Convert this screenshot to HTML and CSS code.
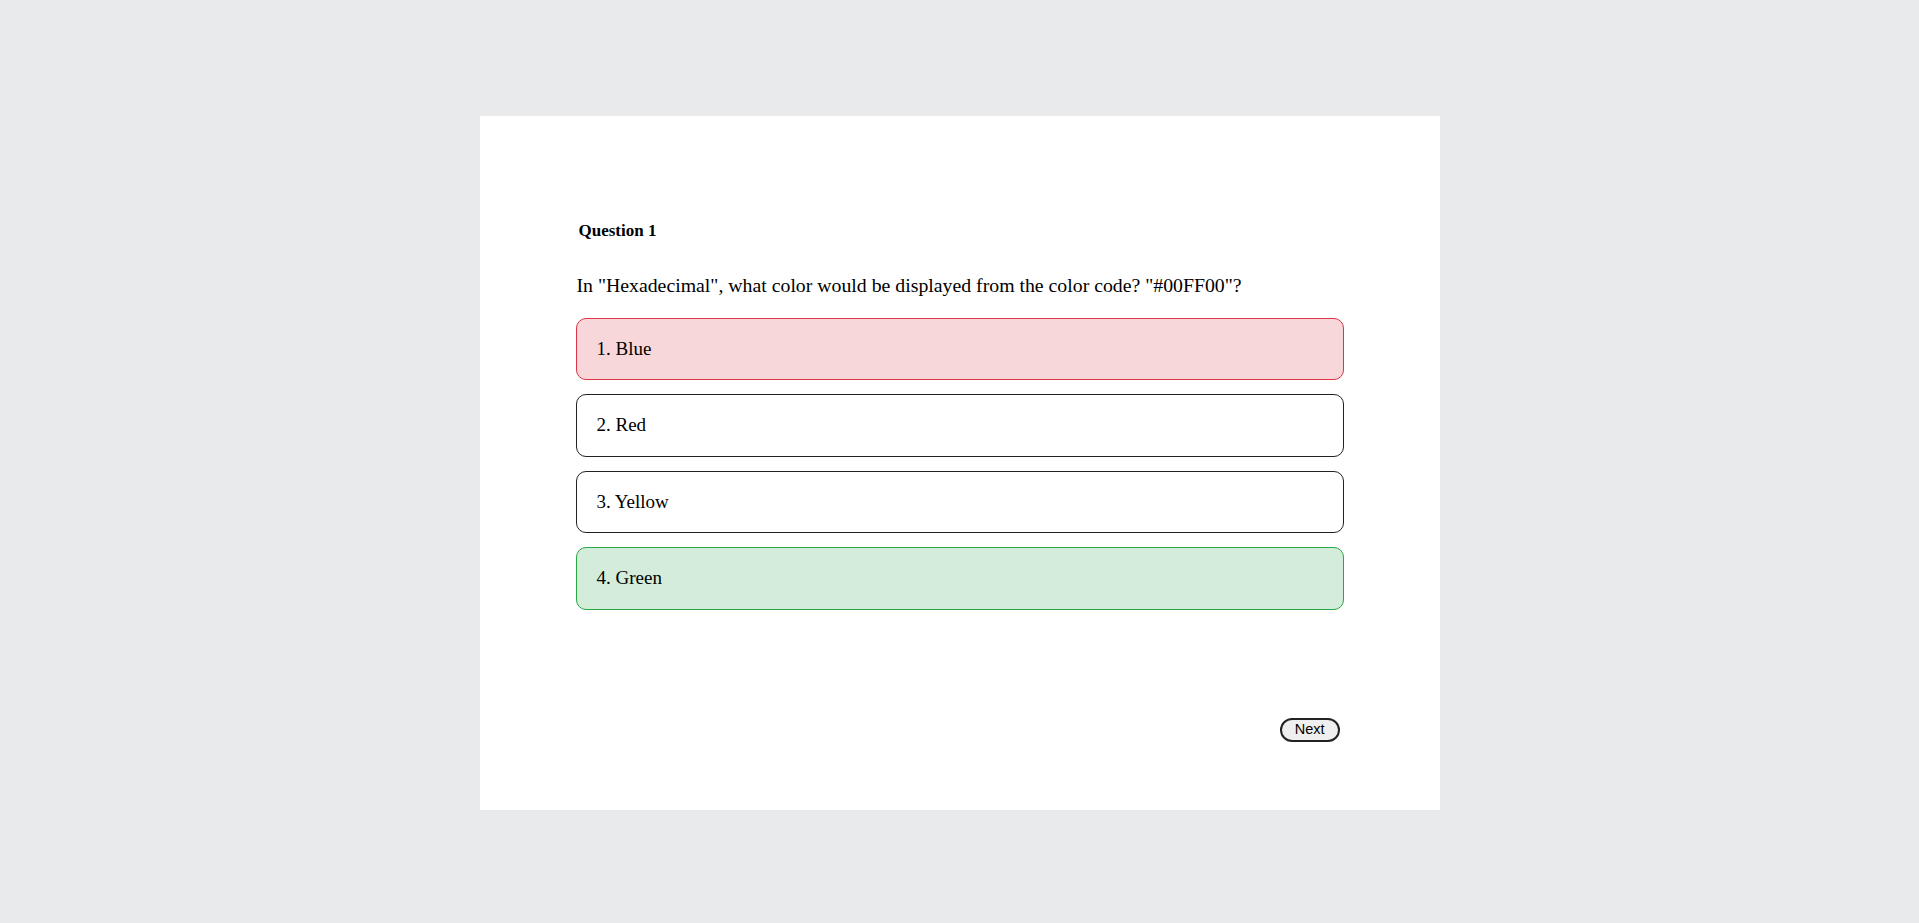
FILE: index.html
```html
<!DOCTYPE html>
<html lang="en">
<head>
<meta charset="utf-8">
<title>Quiz</title>
<link rel="stylesheet" href="styles.css">
</head>
<body>
<main class="card">
  <h4 class="q-label">Question 1</h4>
  <p class="q-text">In "Hexadecimal", what color would be displayed from the color code? "#00FF00"?</p>
  <div class="options">
    <div class="option wrong">1. Blue</div>
    <div class="option">2. Red</div>
    <div class="option">3. Yellow</div>
    <div class="option right">4. Green</div>
  </div>
  <div class="actions">
    <button class="next-btn" type="button">Next</button>
  </div>
</main>
</body>
</html>
```

FILE: styles.css
```css
html, body {
  margin: 0;
  padding: 0;
}
body {
  background: #e9eaec;
  font-family: "Liberation Serif", "Times New Roman", serif;
  color: #000;
  min-height: 923px;
  padding-top: 116px;
  box-sizing: border-box;
}
.card {
  width: 960px;
  margin: 0 auto;
  background: #fff;
  box-sizing: border-box;
  padding: 106px 96px 68px 96px;
}
.q-label {
  margin: 0;
  padding-left: 3px;
  font-size: 17px;
  line-height: 18px;
  font-weight: bold;
}
.q-text {
  margin: 34px 0 0 1px;
  font-size: 19.8px;
  line-height: 23px;
}
.options {
  margin-top: 21px;
  display: flex;
  flex-direction: column;
  gap: 14px;
}
.option {
  border: 1px solid #222;
  border-radius: 10px;
  padding: 19px 20px;
  font-size: 19px;
  line-height: 22.4px;
  background: #fff;
}
.option.wrong {
  background: #f8d7da;
  border-color: #dc3545;
}
.option.right {
  background: #d4edda;
  border-color: #28a745;
}
.actions {
  margin-top: 108px;
  display: flex;
  justify-content: flex-end;
  padding-right: 4px;
}
.next-btn {
  font-family: "Liberation Sans", Arial, sans-serif;
  font-size: 14.5px;
  line-height: 17px;
  height: 24px;
  padding: 0 13px;
  border: 2px solid #222;
  border-radius: 12px;
  background: #efefef;
  color: #000;
}
```
